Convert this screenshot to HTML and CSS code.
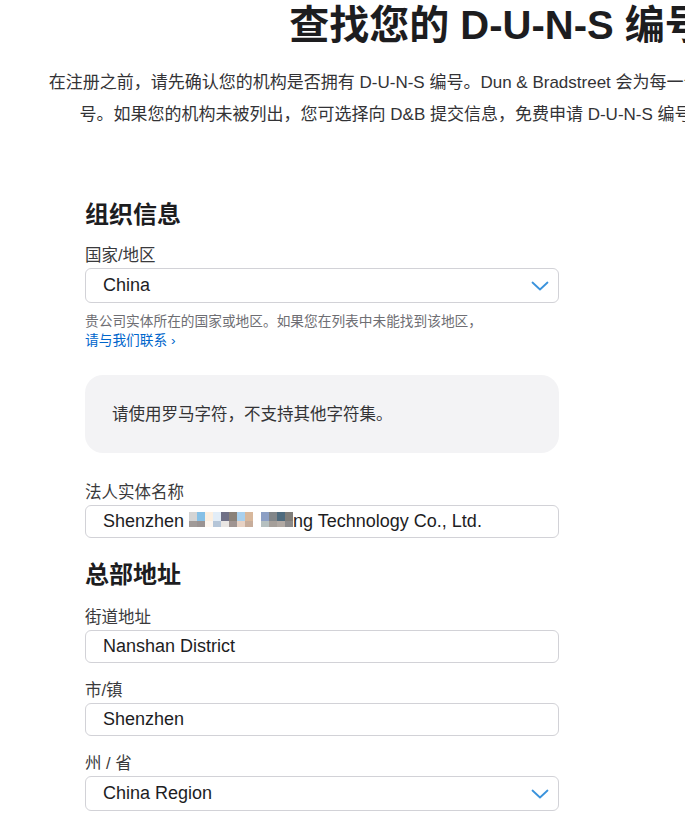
FILE: index.html
```html
<!DOCTYPE html>
<html lang="zh-CN">
<head>
  <meta charset="UTF-8" />
  <meta name="viewport" content="width=device-width, initial-scale=1.0"/>
  <title>查找您的 D-U-N-S 编号</title>
  <link rel="stylesheet" href="styles.css">
</head>
<body>

  <div class="page">
    <header class="hero">
      <h1>查找您的 D-U-N-S 编号</h1>
      <p>在注册之前，请先确认您的机构是否拥有 D-U-N-S 编号。Dun &amp; Bradstreet 会为每一个合法实体分配唯一的 D-U-N-S 编<br>号。如果您的机构未被列出，您可选择向 D&amp;B 提交信息，免费申请 D-U-N-S 编号。处理通常需要 5 个工作日。</p>
    </header>

    <form class="form">
      <!-- 组织信息 -->
      <h2>组织信息</h2>
      <div class="field">
        <label>国家/地区</label>
        <div class="select">
          <span>China</span>
          <svg width="18" height="10" viewBox="0 0 18 10"><polyline points="1.5,1.5 9,8.5 16.5,1.5" fill="none" stroke="#3a93dc" stroke-width="1.8" stroke-linecap="round" stroke-linejoin="round"/></svg>
        </div>
        <p class="hint">贵公司实体所在的国家或地区。如果您在列表中未能找到该地区，<br><a href="#">请与我们联系 ›</a></p>
      </div>

      <div class="notice">请使用罗马字符，不支持其他字符集。</div>

      <div class="field">
        <label>法人实体名称</label>
        <div class="input"><span>Shenzhen <span class="mosaic"></span>ng Technology Co., Ltd.</span></div>
      </div>

      <!-- 总部地址 -->
      <h2 class="section">总部地址</h2>
      <div class="field">
        <label>街道地址</label>
        <div class="input"><span>Nanshan District</span></div>
      </div>
      <div class="field">
        <label>市/镇</label>
        <div class="input"><span>Shenzhen</span></div>
      </div>
      <div class="field">
        <label>州 / 省</label>
        <div class="select">
          <span>China Region</span>
          <svg width="18" height="10" viewBox="0 0 18 10"><polyline points="1.5,1.5 9,8.5 16.5,1.5" fill="none" stroke="#3a93dc" stroke-width="1.8" stroke-linecap="round" stroke-linejoin="round"/></svg>
        </div>
      </div>
    </form>
  </div>

</body>
</html>
```

FILE: styles.css
```css
* {
  box-sizing: border-box;
}

html, body {
  margin: 0;
  padding: 0;
  overflow: hidden;
  background: #fff;
  color: #1d1d1f;
  font-family: 'Liberation Sans', 'Noto Sans CJK SC', sans-serif;
}

.page {
  width: 994px;
}

.hero {
  text-align: center;
}

.hero h1 {
  margin: 0;
  padding-top: 3px;
  font-size: 40px;
  line-height: 44px;
  font-weight: 700;
  white-space: nowrap;
}

.hero p {
  margin: 20px 0 0;
  font-size: 17px;
  line-height: 32px;
  color: #333336;
  white-space: nowrap;
}

.form {
  width: 474px;
  margin: 69px 0 0 85px;
}

.form h2 {
  margin: 0 0 14px;
  font-size: 24px;
  line-height: 30px;
  font-weight: 700;
}

.form h2.section {
  margin-top: 22px;
  margin-bottom: 16px;
}

.field {
  margin-bottom: 16px;
}

.field label {
  display: block;
  font-size: 16.5px;
  line-height: 22px;
  color: #3a3a3c;
  margin-bottom: 2px;
}

.input,
.select {
  display: flex;
  align-items: center;
  height: 33px;
  padding: 0 17px;
  border: 1px solid #d2d2d7;
  border-radius: 6px;
  font-size: 18px;
  color: #1d1d1f;
  white-space: nowrap;
}

.select {
  height: 35px;
  justify-content: space-between;
  padding-right: 9px;
}

.mosaic {
  display: inline-block;
  width: 104px;
  height: 15px;
  background:
    linear-gradient(to right,
      #d4d4d4 0 8px, #86c0e6 8px 16px, #fcefe0 16px 24px, #e2edf7 24px 32px,
      #6f7086 32px 40px, #8a8178 40px 48px, #a8d0ee 48px 56px, #d8b89c 56px 64px,
      #fff 64px 72px, #8c9fc4 72px 80px, #828689 80px 88px, #4e6b7e 88px 96px, #7f7d79 96px 104px)
      top / 100% 9px no-repeat,
    linear-gradient(to right,
      #a09a98 0 8px, #9a9392 8px 16px, #fdf6ef 16px 24px, #b6c6d8 24px 32px,
      #e9e6e3 32px 40px, #9f9491 40px 48px, #e7d2c4 48px 56px, #c7ad9b 56px 64px,
      #fff 64px 72px, #b6c0c0 72px 80px, #a59f9a 80px 88px, #b1a9a3 88px 96px, #8b8a8b 96px 104px)
      bottom / 100% 6px no-repeat;
}

.hint {
  margin: 9px 0 0;
  font-size: 13.7px;
  line-height: 19px;
  color: #6e6e73;
}

.hint a {
  color: #0066cc;
  text-decoration: none;
}

.notice {
  margin: 25px 0 28px;
  padding: 27px;
  background: #f3f3f5;
  border-radius: 18px;
  font-size: 16.5px;
  line-height: 24px;
  color: #333336;
}
```
